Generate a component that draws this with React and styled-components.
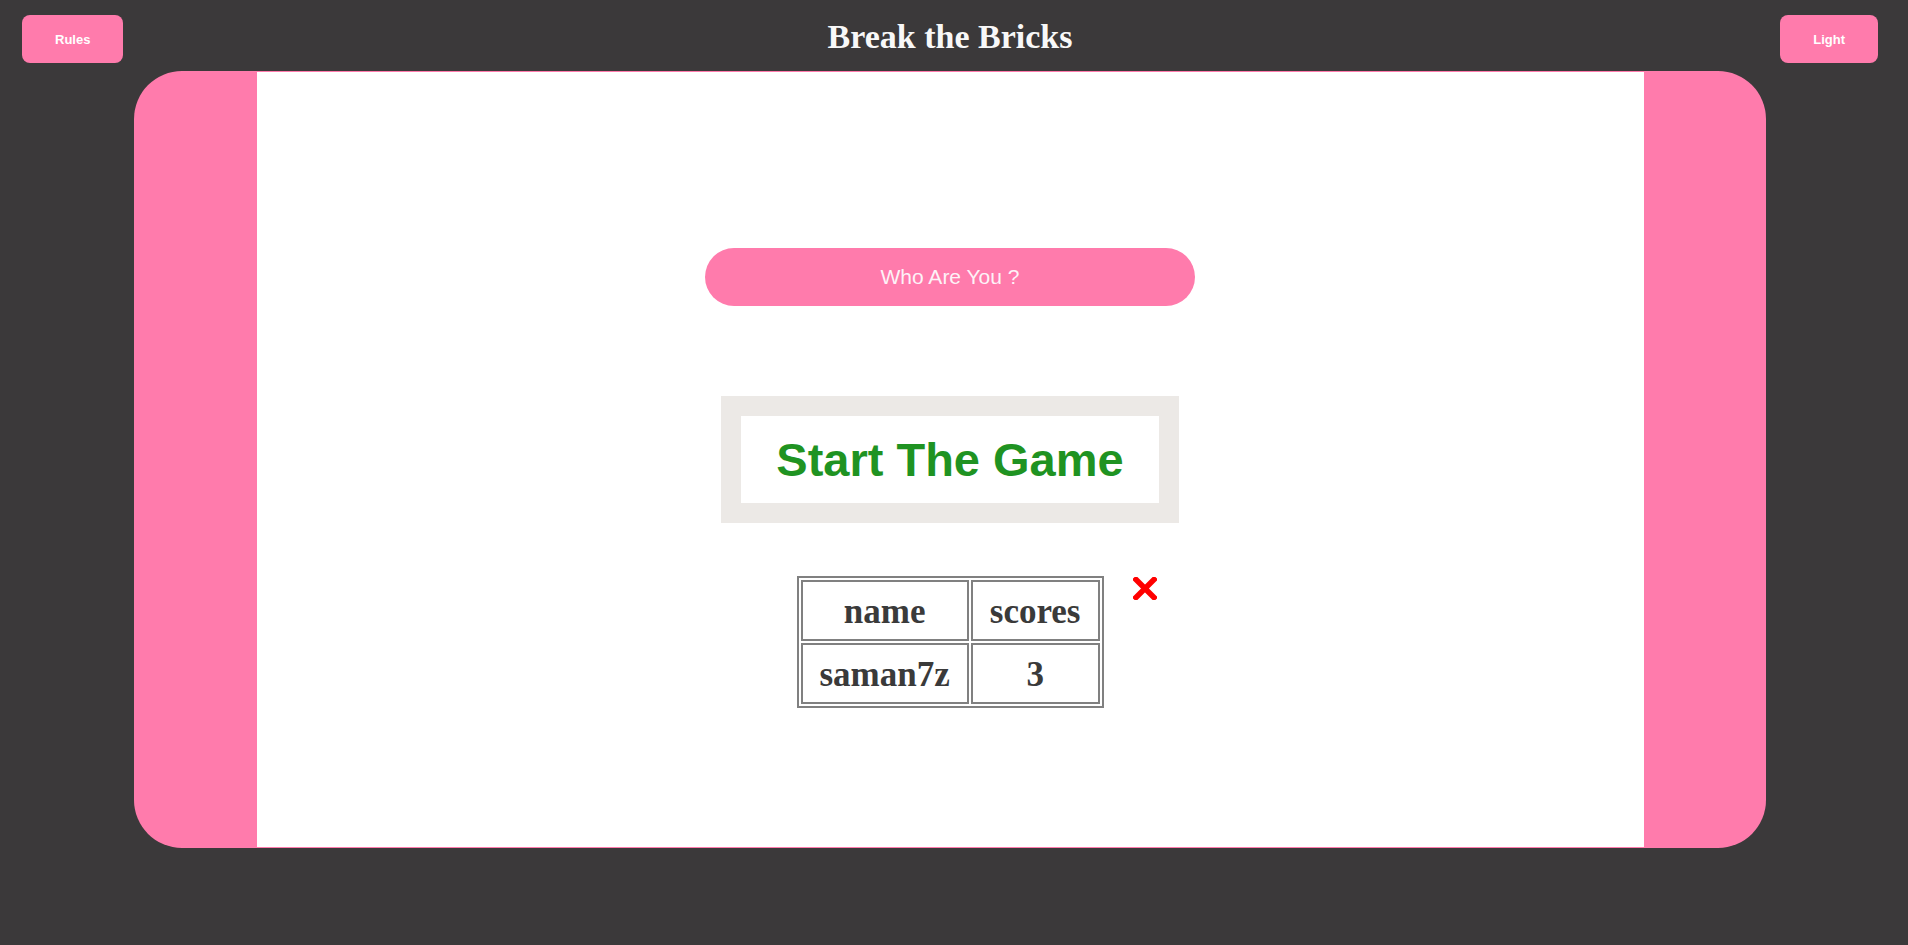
import styled, { createGlobalStyle } from "styled-components";

const GlobalStyle = createGlobalStyle`
  body {
    margin: 0;
    background-color: #3b393a;
    font-family: "Liberation Sans", Arial, sans-serif;
  }
`;

function App() {
  return (
    <>
      <GlobalStyle />
      <Page>
        <Header>
          <NavButton className="left">Rules</NavButton>
          <Title>Break the Bricks</Title>
          <NavButton className="right">Light</NavButton>
        </Header>
        <Board>
          <Canvas>
            <NameInput placeholder="Who Are You ?" />
            <StartButton>
              <span>Start The Game</span>
            </StartButton>
            <ScoreWrapper>
              <ScoreTable>
                <tbody>
                  <tr>
                    <Cell>name</Cell>
                    <Cell>scores</Cell>
                  </tr>
                  <tr>
                    <Cell>saman7z</Cell>
                    <Cell>3</Cell>
                  </tr>
                </tbody>
              </ScoreTable>
              <CloseButton aria-label="close">
                <svg width="24" height="23" viewBox="0 0 24 23">
                  <path
                    d="M3 2.5 L21 20.5 M21 2.5 L3 20.5"
                    stroke="#ff0000"
                    strokeWidth="5.5"
                    strokeLinecap="square"
                  />
                </svg>
              </CloseButton>
            </ScoreWrapper>
          </Canvas>
        </Board>
      </Page>
    </>
  );
}

const Page = styled.div`
  width: 1900px;
  min-height: 945px;
`;

const Header = styled.header`
  display: grid;
  grid-template-columns: 1fr auto 1fr;
  align-items: center;
  padding: 15px 22px 0;
  height: 48px;

  .left {
    justify-self: start;
  }

  .right {
    justify-self: end;
  }
`;

const NavButton = styled.button`
  height: 48px;
  padding: 0 33px;
  border: none;
  border-radius: 8px;

  background-color: #ff7bac;
  color: #ffffff;
  font-family: "Liberation Sans", Arial, sans-serif;
  font-size: 13px;
  font-weight: 700;
  cursor: pointer;
`;

const Title = styled.h1`
  margin: -4px 0 0;

  color: #f8f8f8;
  font-family: "Liberation Serif", "Times New Roman", serif;
  font-size: 34px;
  font-weight: 700;
  line-height: 44px;
`;

const Board = styled.main`
  display: flex;
  justify-content: center;
  align-items: center;
  width: 1632px;
  height: 777px;
  margin: 8px auto 0;
  border-radius: 48px;

  background-color: #ff7bac;
`;

const Canvas = styled.section`
  display: flex;
  flex-direction: column;
  align-items: center;
  width: 1387px;
  height: 775px;

  background-color: #ffffff;
`;

const NameInput = styled.input`
  box-sizing: border-box;
  width: 490px;
  height: 58px;
  margin-top: 176px;
  border: none;
  border-radius: 29px;
  outline: none;

  background-color: #ff7bac;
  color: #ffffff;
  font-family: "Liberation Sans", Arial, sans-serif;
  font-size: 21px;
  text-align: center;

  &::placeholder {
    color: #fdf2f7;
  }
`;

const StartButton = styled.div`
  box-sizing: border-box;
  display: flex;
  justify-content: center;
  align-items: center;
  width: 458px;
  height: 127px;
  margin-top: 90px;
  border: 20px solid #ece9e6;

  background-color: #ffffff;
  cursor: pointer;

  span {
    color: #1f9322;
    font-family: "Liberation Sans", Arial, sans-serif;
    font-size: 47px;
    font-weight: 700;
  }
`;

const ScoreWrapper = styled.div`
  position: relative;
  margin-top: 53px;
`;

const ScoreTable = styled.table`
  border: 2px solid #808080;
  border-spacing: 2px;
`;

const Cell = styled.td`
  box-sizing: border-box;
  height: 61px;
  padding: 2px 17px 0;
  border: 2px solid #808080;

  color: #3a3a3a;
  font-family: "Liberation Serif", "Times New Roman", serif;
  font-size: 35px;
  font-weight: 700;
  text-align: center;
  line-height: 55px;
`;

const CloseButton = styled.div`
  position: absolute;
  top: 1px;
  left: calc(100% + 29px);
  display: flex;
  cursor: pointer;
`;

export default App;
